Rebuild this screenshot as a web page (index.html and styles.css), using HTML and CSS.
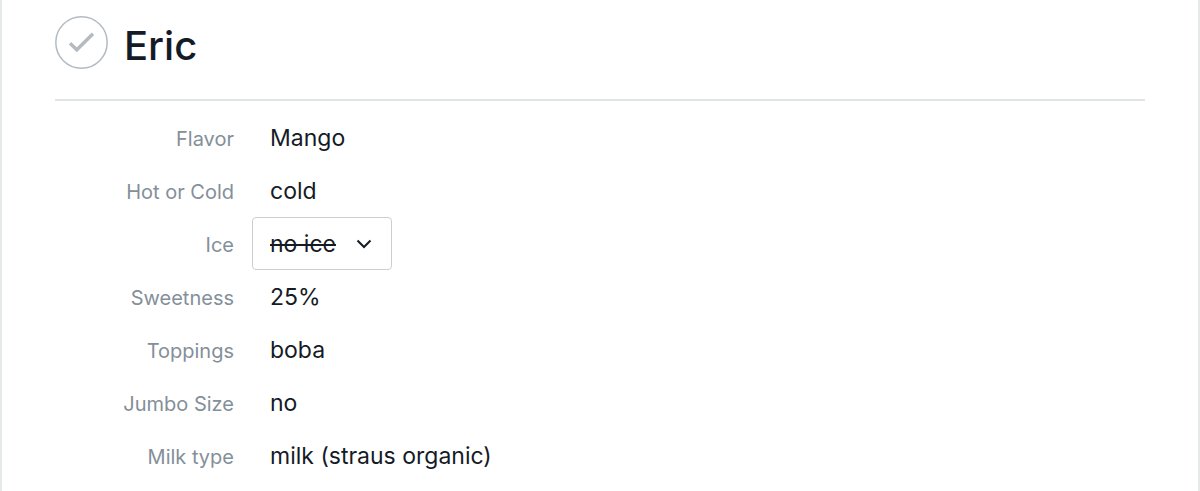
FILE: index.html
```html
<!DOCTYPE html>
<html lang="en">
<head>
<meta charset="utf-8">
<title>Eric</title>
<link rel="stylesheet" href="styles.css">
</head>
<body>
<main class="pane">
  <header class="header">
    <button class="complete" type="button" aria-label="Mark complete">
      <svg class="complete-icon" viewBox="0 0 53 53" aria-hidden="true">
        <circle cx="26.5" cy="26.5" r="25.7" fill="none" stroke="#b3bbc1" stroke-width="1.5"/>
        <path d="M15 27.3 L21.8 33.8 L38 17.8" fill="none" stroke="#b3bbc1" stroke-width="3.4"/>
      </svg>
    </button>
    <h1 class="title">Eric</h1>
  </header>
  <dl class="fields">
    <div class="field"><dt class="label">Flavor</dt><dd class="value">Mango</dd></div>
    <div class="field"><dt class="label">Hot or Cold</dt><dd class="value">cold</dd></div>
    <div class="field">
      <dt class="label"><label for="ice">Ice</label></dt>
      <dd class="value value-select">
        <select class="select" id="ice"><option>no ice</option></select>
        <svg class="chevron" viewBox="0 0 16 10" aria-hidden="true"><path d="M1.5 1.5 L8 8 L14.5 1.5" fill="none" stroke="#151b26" stroke-width="2"/></svg>
      </dd>
    </div>
    <div class="field"><dt class="label">Sweetness</dt><dd class="value">25%</dd></div>
    <div class="field"><dt class="label">Toppings</dt><dd class="value">boba</dd></div>
    <div class="field"><dt class="label">Jumbo Size</dt><dd class="value">no</dd></div>
    <div class="field"><dt class="label">Milk type</dt><dd class="value">milk (straus organic)</dd></div>
  </dl>
</main>
</body>
</html>
```
FILE: styles.css
```css
* { box-sizing: border-box; }
body {
  margin: 0;
  background: #fff;
  color: #151b26;
  font-family: Inter, Roboto, sans-serif;
}
.pane {
  min-height: 100vh;
  padding: 16px 53px 0;
  border: solid #e6eaeb;
  border-width: 0 2px;
}
.header {
  display: flex;
  align-items: flex-start;
  gap: 16px;
  padding-bottom: 27px;
  border-bottom: 2px solid #dfe4e6;
}
.complete {
  width: 53px;
  height: 53px;
  padding: 0;
  border: 0;
  background: none;
}
.complete-icon { display: block; width: 53px; height: 53px; }
.title {
  margin: 0;
  padding-top: 4px;
  font-size: 40px;
  font-weight: 500;
  line-height: 52px;
}
.fields { margin: 0; padding-top: 10px; }
.field {
  display: flex;
  align-items: center;
  height: 53px;
}
.label {
  width: 179px;
  padding-top: 2px;
  color: #848f99;
  font-size: 20px;
  text-align: right;
}
.value {
  margin: 0 0 0 18px;
  padding-left: 18px;
  font-size: 23px;
}
.value-select { position: relative; padding-left: 0; }
.select {
  width: 140px;
  height: 53px;
  padding: 0 17px;
  appearance: none;
  border: 1px solid #c9d0d4;
  border-radius: 4px;
  background: #fff;
  color: inherit;
  font: inherit;
  text-decoration: line-through;
}
.chevron {
  position: absolute;
  top: 22px;
  right: 20px;
  width: 16px;
  height: 10px;
  pointer-events: none;
}
```
